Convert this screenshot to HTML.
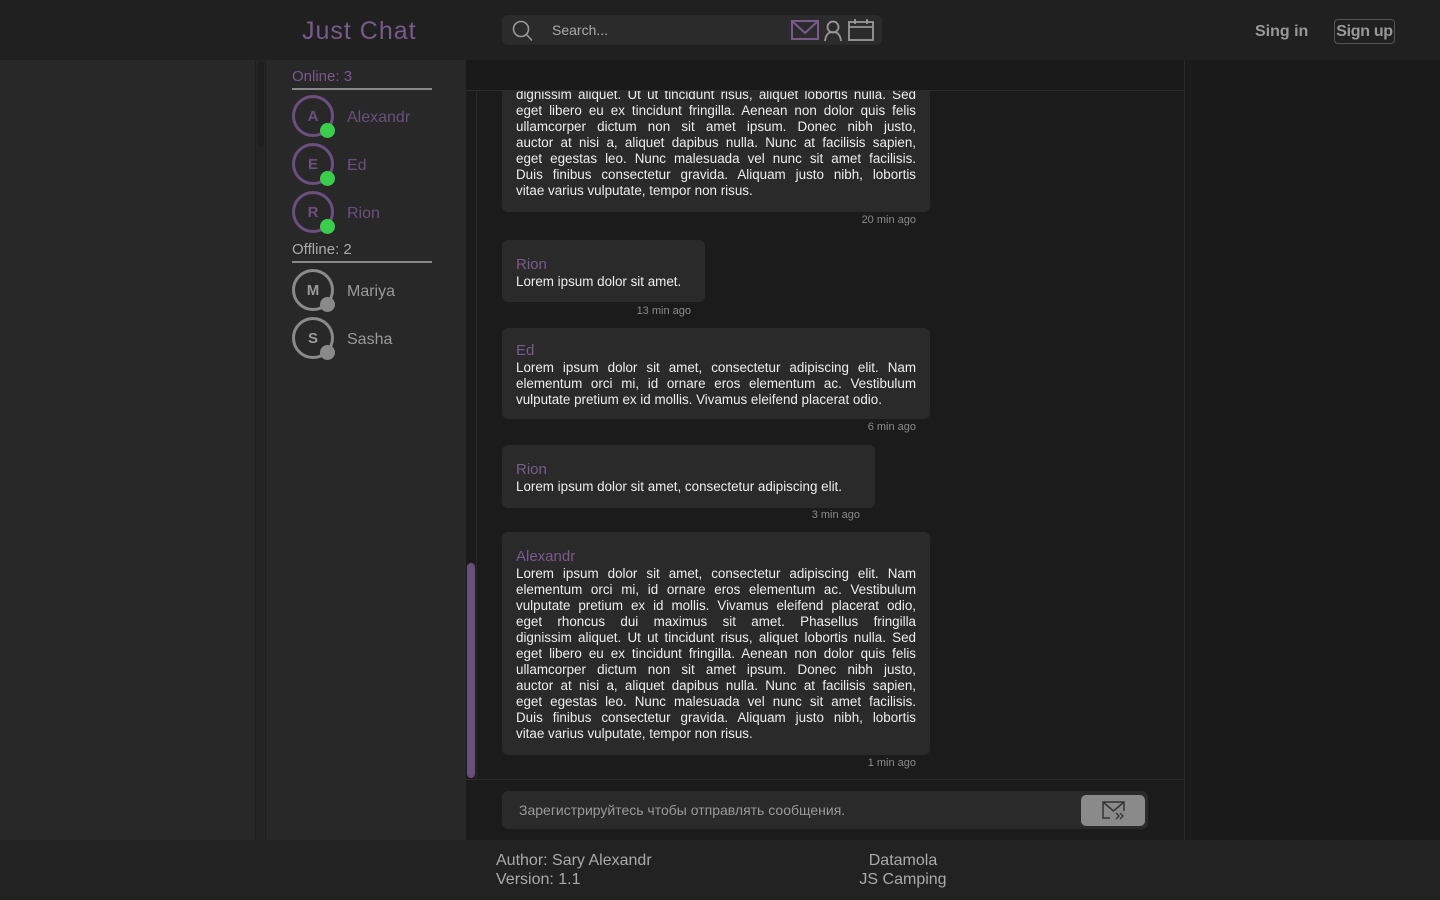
<!DOCTYPE html>
<html><head><meta charset="utf-8"><style>
*{margin:0;padding:0;box-sizing:border-box}
body{width:1440px;height:900px;background:#1a1a1a;font-family:"Liberation Sans","Noto Sans CJK SC",sans-serif;position:relative;overflow:hidden;color:#ddd}
.abs{position:absolute}
#hdr{left:0;top:0;width:1440px;height:60px;background:#202020}
#logo{left:302px;top:17px;font-size:25px;color:#7a5a8c;letter-spacing:1px}
#search{left:502px;top:15px;width:380px;height:30px;background:#2b2b2b;border-radius:6px}
#left{left:0;top:60px;width:255px;height:780px;background:#282828}
#track{left:255px;top:60px;width:11px;height:780px;background:#242424;border-left:1px solid #1e1e1e;border-right:1px solid #1e1e1e}
#thumb{left:258px;top:62px;width:6px;height:85px;background:#1e1e1e;border-radius:3px}
#users{left:266px;top:60px;width:200px;height:780px;background:#282828}
.sec{position:absolute;left:292px;width:140px;font-size:15px;border-bottom:2px solid #888;height:30px;padding-top:8px}
.av{position:absolute;left:292px;width:42px;height:42px;border-radius:50%;border:3px solid #6c4f7e;text-align:center;font-weight:bold;font-size:15px;line-height:38px;color:#6c4f7e}
.av i{position:absolute;left:25px;top:25px;width:15px;height:15px;border-radius:50%;background:#3ccc4c}
.av.off{border-color:#8a8a8a;color:#9a9a9a}.av.off i{background:#8a8a8a}
.un{position:absolute;left:347px;font-size:16px;color:#6c4f7e;margin-top:2px}
.un.off{color:#9a9a9a}
#chat{left:466px;top:60px;width:719px;height:780px;background:#1b1b1b;border-right:1px solid #2a2a2a}
#chtop{left:466px;top:60px;width:718px;height:31px;background:#1a1a1a;border-bottom:1px solid #2c2c2c}
#sb{left:467px;top:563px;width:8px;height:215px;background:#6a4f7c;border-radius:4px}
#sbl{left:476px;top:91px;width:1px;height:688px;background:#2a2a2a}
.b{position:absolute;left:502px;background:#2a2a2a;border-radius:6px;padding:0 14px}
.n{color:#7a5a8c;font-size:15px;line-height:19px;margin-top:1px}
.t{font-size:13.4px;line-height:16px;color:#eee}
.t div{text-align:justify;text-align-last:justify;white-space:nowrap}
.tm{position:absolute;font-size:11px;color:#8a8a8a;text-align:right;margin-top:2px}
#inbar{left:466px;top:779px;width:718px;height:61px;background:#1b1b1b;border-top:1px solid #2a2a2a}
#inp{left:502px;top:791px;width:646px;height:38px;background:#2a2a2a;border-radius:6px;font-size:14px;color:#9a9a9a;padding:11px 17px}
#send{left:1081px;top:795px;width:64px;height:31px;background:#8a8a8a;border-radius:5px}
#foot{left:0;top:840px;width:1440px;height:60px;background:#222}
.f{position:absolute;font-size:16px;color:#aaa;line-height:19px;white-space:nowrap}
</style></head><body>
<div class="abs" id="hdr"></div>
<div class="abs" id="logo">Just Chat</div>
<div class="abs" id="search">
<svg class="abs" style="left:10px;top:5px" width="22" height="22" viewBox="0 0 22 22"><circle cx="9" cy="9" r="7.5" fill="none" stroke="#999" stroke-width="1.6"/><line x1="14.5" y1="14.5" x2="20" y2="20.5" stroke="#999" stroke-width="1.6"/></svg>
<div class="abs" style="left:50px;top:7px;font-size:14px;color:#aaa">Search...</div>
<svg class="abs" style="left:289px;top:5px" width="28" height="20" viewBox="0 0 28 20"><rect x="1" y="1" width="26" height="18" fill="none" stroke="#7a5a8c" stroke-width="2"/><polyline points="1,1 14,13 27,1" fill="none" stroke="#7a5a8c" stroke-width="2"/></svg>
<svg class="abs" style="left:321px;top:5px" width="20" height="22" viewBox="0 0 20 22"><circle cx="10" cy="7" r="5.5" fill="none" stroke="#999" stroke-width="1.8"/><path d="M2 21 Q3 12 10 12 Q17 12 18 21" fill="none" stroke="#999" stroke-width="1.8"/></svg>
<svg class="abs" style="left:346px;top:4px" width="26" height="22" viewBox="0 0 26 22"><rect x="1" y="3" width="24" height="18" fill="none" stroke="#999" stroke-width="1.8"/><line x1="1" y1="8" x2="25" y2="8" stroke="#999" stroke-width="1.8"/><line x1="7" y1="0" x2="7" y2="5" stroke="#999" stroke-width="1.8"/><line x1="19" y1="0" x2="19" y2="5" stroke="#999" stroke-width="1.8"/></svg>
</div>
<div class="abs" style="left:1255px;top:23px;font-size:16px;font-weight:bold;color:#999">Sing in</div>
<div class="abs" style="left:1334px;top:19px;width:61px;height:25px;border:1px solid #555;border-radius:4px;font-size:16px;font-weight:bold;color:#999;text-align:center;line-height:24px;letter-spacing:-0.3px">Sign up</div>

<div class="abs" id="left"></div>
<div class="abs" id="track"></div>
<div class="abs" id="thumb"></div>
<div class="abs" id="users"></div>
<div class="sec" style="top:60px;color:#7a5a8c">Online: 3</div>
<div class="av" style="top:95px">A<i></i></div><div class="un" style="top:107px">Alexandr</div>
<div class="av" style="top:143px">E<i></i></div><div class="un" style="top:155px">Ed</div>
<div class="av" style="top:191px">R<i></i></div><div class="un" style="top:203px">Rion</div>
<div class="sec" style="top:233px;color:#aaa">Offline: 2</div>
<div class="av off" style="top:269px">M<i></i></div><div class="un off" style="top:281px">Mariya</div>
<div class="av off" style="top:317px">S<i></i></div><div class="un off" style="top:329px">Sasha</div>

<div class="abs" id="chat"></div>
<div class="abs" id="sbl"></div>
<div class="abs" id="sb"></div>

<div class="b" style="top:71px;width:428px;height:141px;padding-top:16px"><div class="t">
<div>dignissim aliquet. Ut ut tincidunt risus, aliquet lobortis nulla. Sed</div>
<div>eget libero eu ex tincidunt fringilla. Aenean non dolor quis felis</div>
<div>ullamcorper dictum non sit amet ipsum. Donec nibh justo,</div>
<div>auctor at nisi a, aliquet dapibus nulla. Nunc at facilisis sapien,</div>
<div>eget egestas leo. Nunc malesuada vel nunc sit amet facilisis.</div>
<div>Duis finibus consectetur gravida. Aliquam justo nibh, lobortis</div>
<div style="text-align-last:left">vitae varius vulputate, tempor non risus.</div></div></div>
<div class="abs" id="chtop"></div>
<div class="tm" style="left:800px;width:116px;top:212px">20 min ago</div>

<div class="b" style="top:240px;width:203px;height:62px;padding-top:14px"><div class="n">Rion</div><div class="t">Lorem ipsum dolor sit amet.</div></div>
<div class="tm" style="left:580px;width:111px;top:303px">13 min ago</div>

<div class="b" style="top:328px;width:428px;height:91px;padding-top:12px"><div class="n">Ed</div><div class="t">
<div>Lorem ipsum dolor sit amet, consectetur adipiscing elit. Nam</div>
<div>elementum orci mi, id ornare eros elementum ac. Vestibulum</div>
<div style="text-align-last:left">vulputate pretium ex id mollis. Vivamus eleifend placerat odio.</div></div></div>
<div class="tm" style="left:800px;width:116px;top:419px">6 min ago</div>

<div class="b" style="top:445px;width:373px;height:63px;padding-top:14px"><div class="n">Rion</div><div class="t">Lorem ipsum dolor sit amet, consectetur adipiscing elit.</div></div>
<div class="tm" style="left:760px;width:100px;top:507px">3 min ago</div>

<div class="b" style="top:532px;width:428px;height:223px;padding-top:14px"><div class="n">Alexandr</div><div class="t">
<div>Lorem ipsum dolor sit amet, consectetur adipiscing elit. Nam</div>
<div>elementum orci mi, id ornare eros elementum ac. Vestibulum</div>
<div>vulputate pretium ex id mollis. Vivamus eleifend placerat odio,</div>
<div>eget rhoncus dui maximus sit amet. Phasellus fringilla</div>
<div>dignissim aliquet. Ut ut tincidunt risus, aliquet lobortis nulla. Sed</div>
<div>eget libero eu ex tincidunt fringilla. Aenean non dolor quis felis</div>
<div>ullamcorper dictum non sit amet ipsum. Donec nibh justo,</div>
<div>auctor at nisi a, aliquet dapibus nulla. Nunc at facilisis sapien,</div>
<div>eget egestas leo. Nunc malesuada vel nunc sit amet facilisis.</div>
<div>Duis finibus consectetur gravida. Aliquam justo nibh, lobortis</div>
<div style="text-align-last:left">vitae varius vulputate, tempor non risus.</div></div></div>
<div class="tm" style="left:800px;width:116px;top:755px">1 min ago</div>

<div class="abs" id="inbar"></div>
<div class="abs" id="inp">Зарегистрируйтесь чтобы отправлять сообщения.</div>
<div class="abs" id="send"><svg class="abs" style="left:21px;top:6px" width="24" height="20" viewBox="0 0 24 20"><path d="M8 17 H1 V1 H22 V10" fill="none" stroke="#333" stroke-width="1.5"/><polyline points="1,1 11.5,10 22,1" fill="none" stroke="#333" stroke-width="1.5"/><path d="M14 12 l3 3 -3 3 M18 12 l3 3 -3 3" fill="none" stroke="#333" stroke-width="1.3"/></svg></div>

<div class="abs" id="foot"></div>
<div class="f" style="left:496px;top:851px">Author: Sary Alexandr<br>Version: 1.1</div>
<div class="f" style="left:843px;top:851px;text-align:center;width:120px">Datamola<br>JS Camping</div>
</body></html>
